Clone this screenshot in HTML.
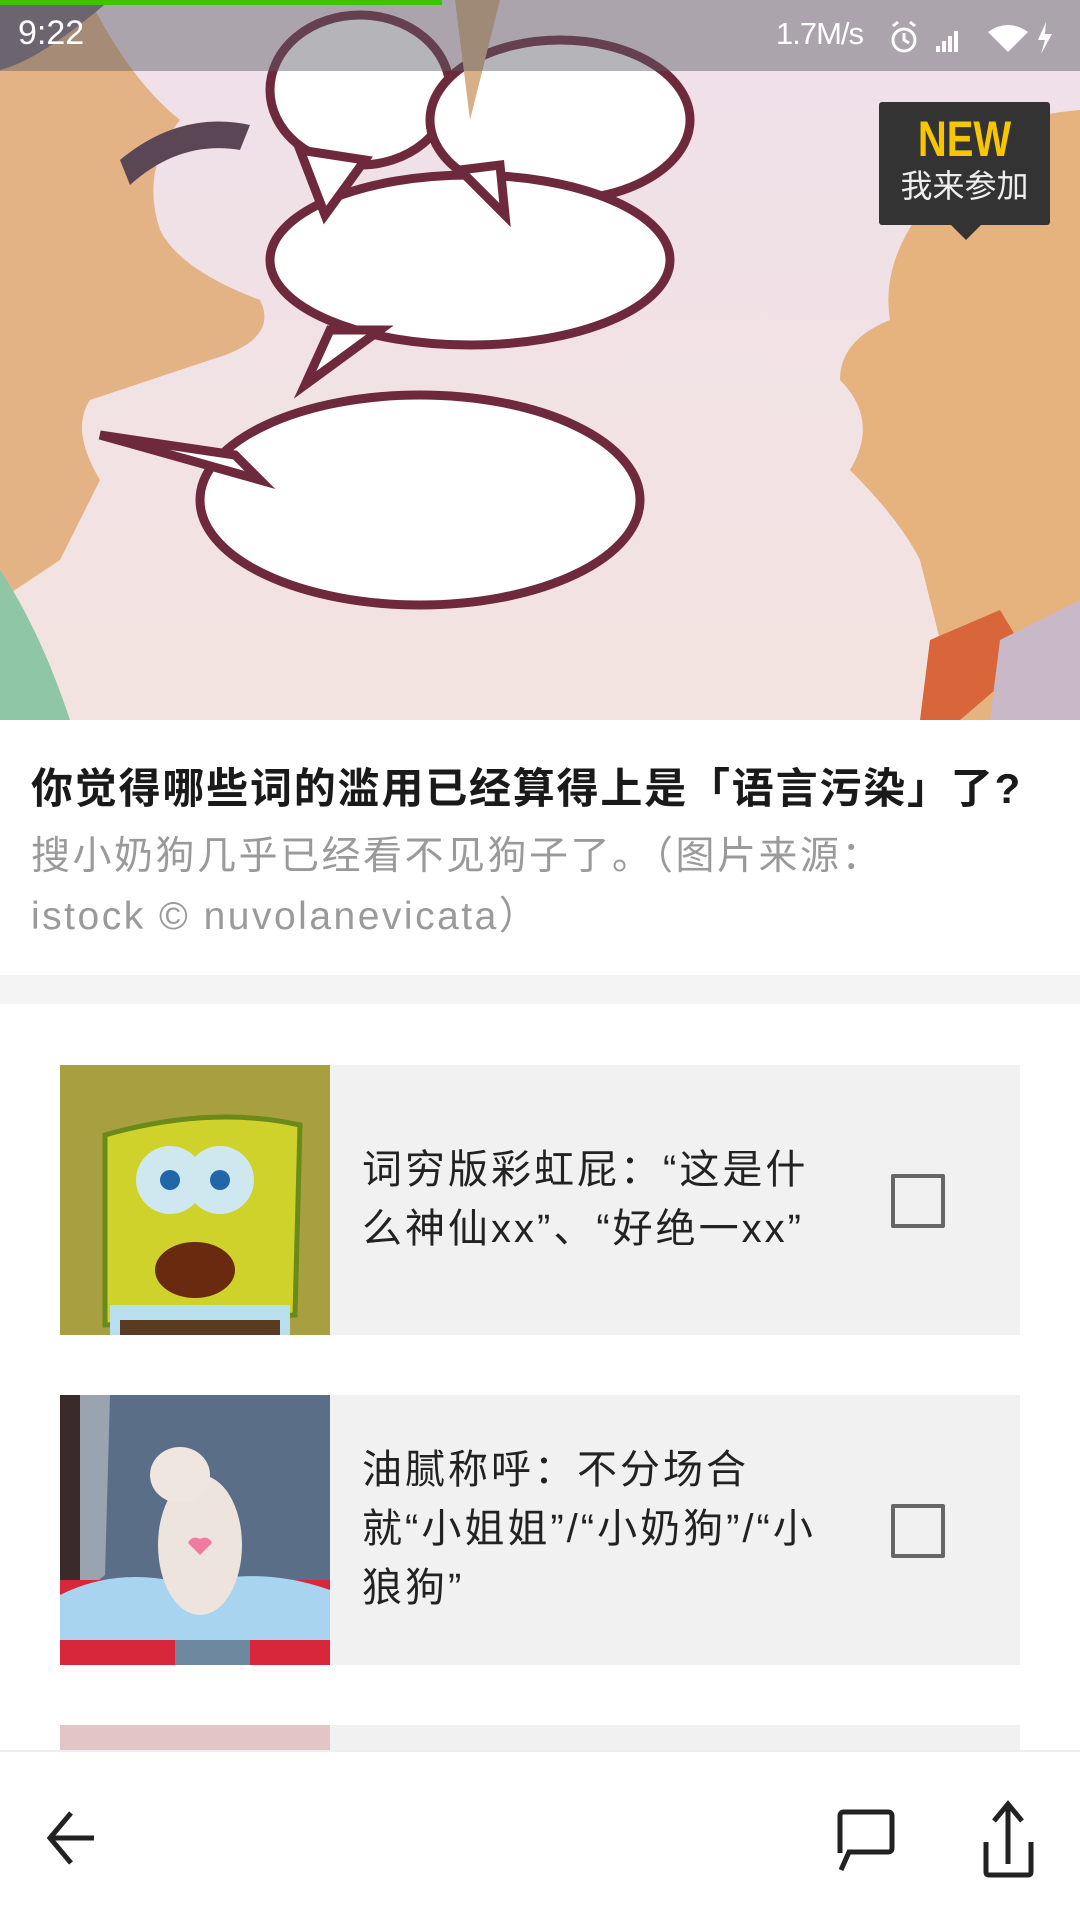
<!DOCTYPE html>
<html><head><meta charset="utf-8"><style>
*{margin:0;padding:0;box-sizing:border-box}
body{width:1080px;height:1920px;overflow:hidden;background:#fff;font-family:"Liberation Sans","Noto Sans CJK SC",sans-serif;position:relative}
.abs{position:absolute}
.item{position:absolute;left:60px;width:960px;height:270px;background:#f1f1f1}
.item .img{position:absolute;left:0;top:0;width:270px;height:270px;overflow:hidden}
.item .txt{position:absolute;left:302px;width:560px;font-size:40px;letter-spacing:3px;line-height:59px;color:#222;white-space:nowrap}
.item .cb{position:absolute;left:831px;top:109px;width:54px;height:54px;border:4px solid #666;border-radius:2px}
</style></head><body>
<svg class="abs" style="left:0;top:0" width="1080" height="720" viewBox="0 0 1080 720">
<defs><linearGradient id="bg" x1="0" y1="0" x2="0" y2="1"><stop offset="0" stop-color="#efe0ea"/><stop offset="1" stop-color="#f3e3e0"/></linearGradient></defs>
<rect width="1080" height="720" fill="url(#bg)"/>
<path d="M0 0 H90 Q130 80 180 120 Q140 170 160 230 Q180 270 260 300 Q280 340 210 360 Q150 380 90 400 Q70 430 100 480 Q80 520 60 560 L0 600 Z" fill="#e3b385"/>
<path d="M0 0 H110 Q40 60 0 70 Z" fill="#7a6c78"/>
<path d="M120 160 Q180 110 250 125 L240 150 Q180 140 130 185 Z" fill="#5a4654"/>
<path d="M0 570 Q40 630 70 720 H0 Z" fill="#8fc6a6"/>
<path d="M1080 110 Q960 120 930 200 Q880 260 890 320 Q840 340 840 380 Q880 420 850 470 Q900 520 920 560 L960 720 H1080 Z" fill="#e6b27d"/>
<path d="M930 640 L1000 610 L1030 660 L960 720 H920 Z" fill="#d9663a"/>
<path d="M1000 640 L1080 600 V720 H990 Z" fill="#c9b8c8"/>
<g fill="#fff" stroke="#6e2a3c" stroke-width="9">
<ellipse cx="360" cy="90" rx="90" ry="75"/>
<ellipse cx="560" cy="120" rx="130" ry="80"/>
<ellipse cx="470" cy="260" rx="200" ry="85"/>
<path d="M300 150 L325 215 L365 160 Z"/>
<path d="M460 170 L505 215 L500 165 Z"/>
<path d="M330 330 L305 385 L380 330 Z"/>
<ellipse cx="420" cy="500" rx="220" ry="105"/>
<path d="M235 455 L100 435 L260 480 Z"/>
</g>
<path d="M455 0 L470 120 L500 0 Z" fill="#d8b088"/>
<rect x="0" y="0" width="1080" height="71" fill="rgba(90,90,100,0.45)"/>
<rect x="0" y="0" width="442" height="5" fill="#3fc300"/>
</svg>
<div class="abs" style="left:18px;top:14px;color:#fff;font-size:34px">9:22</div>
<div class="abs" style="left:776px;top:16px;color:#fff;font-size:31px;letter-spacing:-1px">1.7M/s</div>
<svg class="abs" style="left:888px;top:18px" width="170" height="40" viewBox="0 0 170 40">
<g fill="none" stroke="#fff" stroke-width="3"><circle cx="16" cy="22" r="11"/><path d="M16 15 V22 L21 25 M5 8 L10 4 M27 8 L22 4"/></g>
<g fill="#fff"><rect x="48" y="28" width="4" height="6"/><rect x="54" y="23" width="4" height="11"/><rect x="60" y="18" width="4" height="16"/><rect x="66" y="13" width="4" height="21"/>
<path d="M120 34 L100 14 Q120 0 140 14 Z"/><path d="M158 4 L150 22 H157 L153 36 L164 16 H157 Z"/></g>
</svg>
<div class="abs" style="left:879px;top:102px;width:171px;height:123px;background:#333;border-radius:3px;text-align:center">
<div style="color:#f7c600;font-size:50px;font-weight:bold;line-height:54px;margin-top:10px;transform:scaleX(0.8)">NEW</div>
<div style="color:#eee;font-size:32px;line-height:40px">我来参加</div>
</div>
<div class="abs" style="left:950px;top:224px;width:0;height:0;border-left:16px solid transparent;border-right:16px solid transparent;border-top:16px solid #333"></div>

<div class="abs" style="left:31px;top:755px;font-size:42px;letter-spacing:1.8px;font-weight:bold;color:#1a1a1a;white-space:nowrap">你觉得哪些词的滥用已经算得上是「语言污染」了?</div>
<div class="abs" style="left:31px;top:827px;font-size:39px;letter-spacing:2.5px;line-height:60px;color:#9a9a9a;white-space:nowrap">搜小奶狗几乎已经看不见狗子了。（图片来源：<br>istock © nuvolanevicata）</div>
<div class="abs" style="left:0;top:975px;width:1080px;height:29px;background:#f4f4f4"></div>

<div class="item" style="top:1065px">
<svg class="img" viewBox="0 0 270 270"><rect width="270" height="270" fill="#a8a040"/>
<path d="M45 70 Q150 40 240 60 L235 250 L45 260 Z" fill="#cfd22a" stroke="#6a8a1a" stroke-width="5"/>
<circle cx="110" cy="115" r="34" fill="#cfe8f0"/><circle cx="160" cy="115" r="34" fill="#cfe8f0"/>
<circle cx="110" cy="115" r="10" fill="#2266aa"/><circle cx="160" cy="115" r="10" fill="#2266aa"/>
<ellipse cx="135" cy="205" rx="40" ry="28" fill="#6a2a10"/><rect x="50" y="240" width="180" height="30" fill="#b8dff0"/><rect x="60" y="255" width="160" height="15" fill="#5a3a20"/></svg>
<div class="txt" style="top:76px">词穷版彩虹屁：“这是什<br>么神仙xx”、“好绝一xx”</div>
<div class="cb"></div>
</div>

<div class="item" style="top:1395px">
<svg class="img" viewBox="0 0 270 270"><rect width="270" height="270" fill="#5a6e88"/>
<rect x="0" y="0" width="20" height="270" fill="#3a2a2a"/><path d="M20 0 L50 0 L45 180 L20 200 Z" fill="#9aa4b0"/>
<rect x="0" y="185" width="270" height="85" fill="#d8263a"/>
<path d="M0 200 Q60 170 130 190 Q200 170 270 195 V245 H0 Z" fill="#a8d4f0"/>
<ellipse cx="140" cy="150" rx="42" ry="70" fill="#eee4de"/><ellipse cx="120" cy="80" rx="30" ry="28" fill="#f0e6e0"/>
<path d="M140 160 l-12 -12 a8 8 0 0 1 12 -4 a8 8 0 0 1 12 4 z" fill="#f07aa0"/>
<rect x="115" y="245" width="75" height="25" fill="#6e88a0"/></svg>
<div class="txt" style="top:46px">油腻称呼：不分场合<br>就“小姐姐”/“小奶狗”/“小<br>狼狗”</div>
<div class="cb"></div>
</div>

<div class="item" style="top:1725px;height:30px"><div class="img" style="height:30px;background:#e2c6c6"></div></div>

<div class="abs" style="left:0;top:1750px;width:1080px;height:170px;background:#fff;border-top:2px solid #eee"></div>
<svg class="abs" style="left:0;top:1750px" width="1080" height="170" viewBox="0 0 1080 170">
<g fill="none" stroke="#222" stroke-width="5">
<path d="M94 88 H51 M71 63 L50 88 L71 113"/>
<path d="M840 103 V66 Q840 62 844 62 H888 Q892 62 892 66 V98 Q892 102 888 102 H849 L841 120"/>
<path d="M1008 56 V114 M994 71 L1008 54 L1022 71 M986 92 V122 Q986 125 989 125 H1028 Q1031 125 1031 122 V92"/>
</g></svg>
</body></html>
